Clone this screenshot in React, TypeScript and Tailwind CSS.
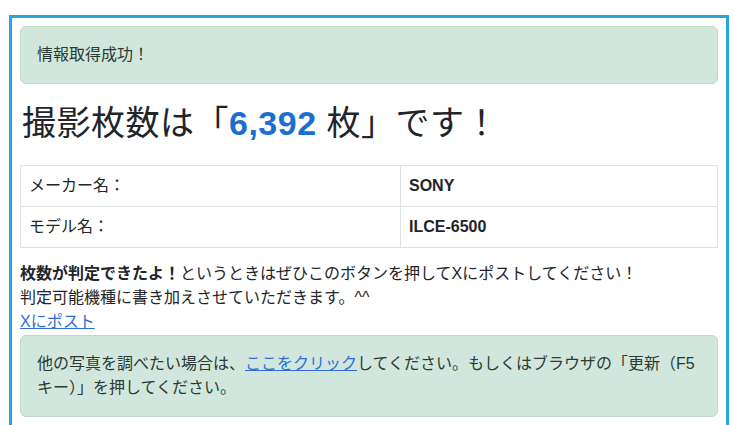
import React from 'react';

const font = { fontFamily: '"Liberation Sans", "Noto Sans CJK JP", sans-serif' };

const specs = [
  { label: 'メーカー名：', value: 'SONY' },
  { label: 'モデル名：', value: 'ILCE-6500' },
];

const App = () => {
  return (
    <div className="min-h-screen bg-white pl-[9px] pt-[15px] text-[#212529]" style={font}>
      <div className="w-[720px] border-[3px] border-[#2aa5dc] p-2 pb-6">
        {/* 取得結果 */}
        <div className="rounded-md border border-[#badbcc] bg-[#d1e7dd] px-4 py-4 text-base leading-6 text-[#2b3a33]">
          情報取得成功！
        </div>

        <h1 className="mt-[19px] mb-[21px] pl-[2px] text-[34px] font-normal leading-[41px] tracking-[0.5px]">
          撮影枚数は「<span className="font-bold text-[#1a6fd0]">6,392</span> 枚」です！
        </h1>

        <table className="w-full border-collapse text-base leading-6">
          <tbody>
            {specs.map((row) => (
              <tr key={row.label}>
                <td className="w-[380px] border border-[#dee2e6] px-2 py-2">{row.label}</td>
                <td className="border border-[#dee2e6] px-2 py-2 font-bold">{row.value}</td>
              </tr>
            ))}
          </tbody>
        </table>

        <p className="mt-[14px] text-base leading-6">
          <b>枚数が判定できたよ！</b>というときはぜひこのボタンを押してXにポストしてください！
          <br />
          判定可能機種に書き加えさせていただきます。^^
          <br />
          <a href="#" className="text-[#2d6fd6] underline">
            Xにポスト
          </a>
        </p>

        <div className="mt-[1px] rounded-md border border-[#badbcc] bg-[#d1e7dd] px-4 py-4 text-base leading-6 text-[#2b3a33]">
          他の写真を調べたい場合は、
          <a href="#" className="text-[#2d6fd6] underline">
            ここをクリック
          </a>
          してください。もしくはブラウザの「更新（F5<span className="whitespace-nowrap">キー）」</span>を押してください。
        </div>
      </div>
    </div>
  );
};

export default App;
